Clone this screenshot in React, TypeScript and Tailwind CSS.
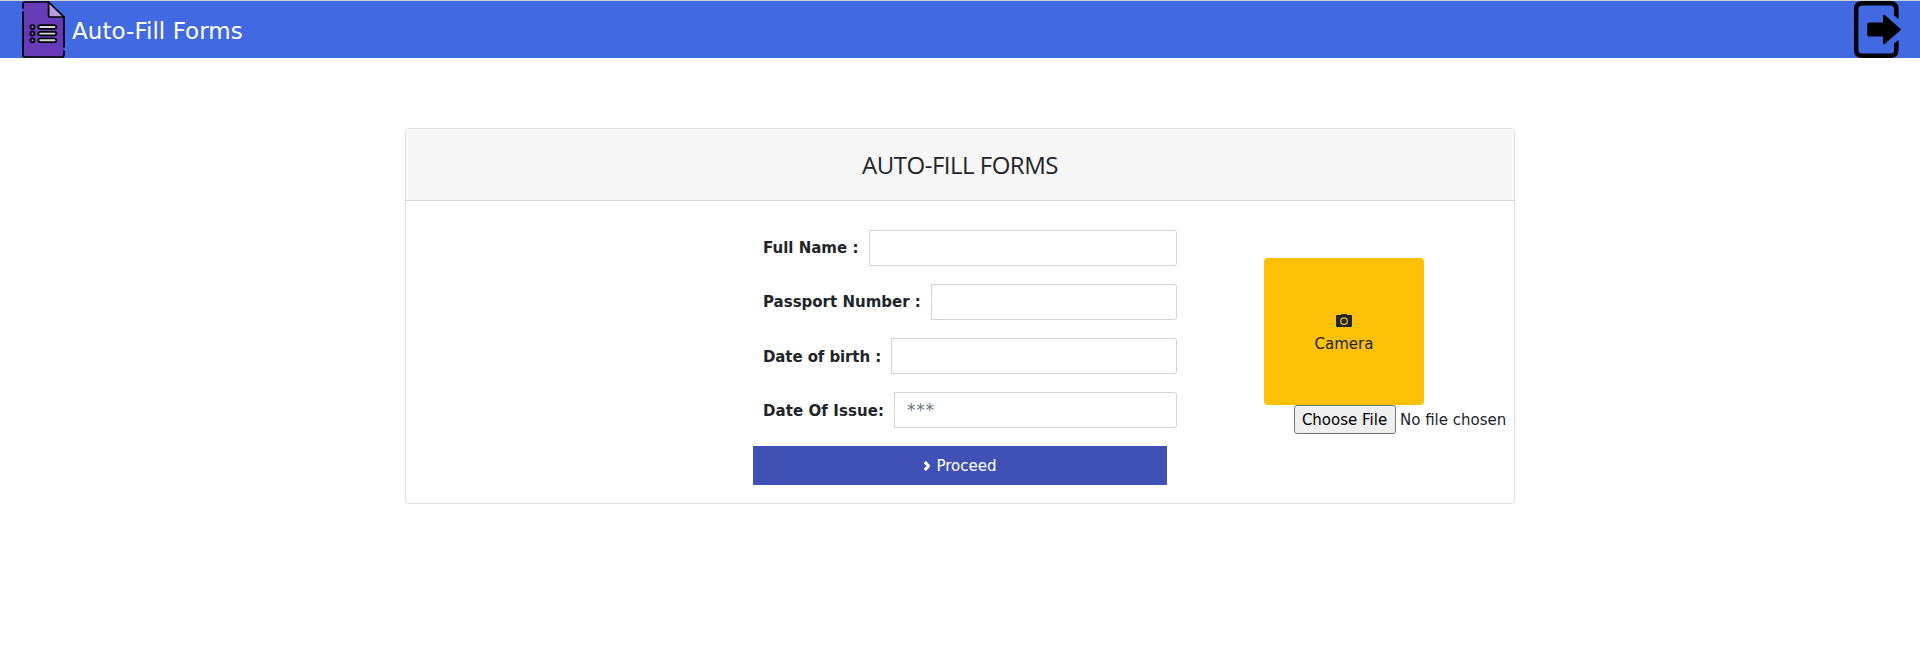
import React from 'react';

function DocumentIcon() {
  return (
    <svg className="block h-[57px] w-[43px]" viewBox="0 0 42 57" preserveAspectRatio="none" fill="none">
      <path d="M3 1H26L41 16V54.500Q41 56 39 56H3Q1 56 1 54V3Q1 1 3 1Z" fill="#673ab7" />
      <path d="M26 1L41 16H27.500Q26 16 26 14.500Z" fill="#b39ddb" />
      <g stroke="#000" strokeWidth="1.700" strokeLinejoin="round" strokeLinecap="round">
        <path d="M1 7V3Q1 1 3 1H26L41 16V46M41 50V54Q41 56 39 56H3Q1 56 1 54V11" />
        <path d="M26 1V14.500Q26 16 27.500 16H41" />
        {[26, 32.6, 39.3].map((y) => (
          <g key={y}>
            <circle cx="10.200" cy={y} r="2" fill="#9575cd" />
            <rect x="16" y={y - 1.8} width="17.500" height="3.600" rx="1.800" fill="#d8d8d8" />
          </g>
        ))}
      </g>
    </svg>
  );
}

function ExitIcon() {
  return (
    <svg className="block h-[57px] w-[48px]" viewBox="0 0 48 57">
      <path d="M42.300 15V8Q42.300 2.200 36.500 2.200H8Q2.200 2.200 2.200 8V49Q2.200 54.800 8 54.800H36.500Q42.300 54.800 42.300 49V42" fill="none" stroke="#000" strokeWidth="4.400" />
      <path d="M40.100 13V14.300L44.500 18.200V13ZM40.100 44V42.700L44.500 38.800V44Z" />
      <path d="M15.500 21.500H29V15Q29.200 13 31 14.200L47.200 28.500L31 42.800Q29.200 44 29 42V35.500H15.500Q13.200 35.500 13.200 33.200V23.800Q13.200 21.500 15.500 21.500Z" />
    </svg>
  );
}

function CameraIcon() {
  return (
    <svg className="block h-[13px] w-4" viewBox="0 0 16 13">
      <path fill="#212529" fillRule="evenodd" d="M1 1H4.800L5.500 0H10.500L11.200 1H15Q16 1 16 2V12Q16 13 15 13H1Q0 13 0 12V2Q0 1 1 1ZM8 3.200A3.900 3.900 0 1 0 8 11A3.900 3.900 0 1 0 8 3.200ZM8 4.400A2.700 2.700 0 1 1 8 9.800A2.700 2.700 0 1 1 8 4.400Z" />
    </svg>
  );
}

const inputBase = 'h-9 rounded-r-[3px] border border-[#ced4da] bg-white px-3 text-[17px] tracking-[0.7px] text-[#495057] outline-none placeholder:text-[#6c757d] placeholder:opacity-100';

const fields = [
  { id: 'name', label: 'Full Name :', labelWidth: 'w-[106px]', tracking: 'tracking-normal', placeholder: '' },
  { id: 'passport', label: 'Passport Number :', labelWidth: 'w-[168px]', tracking: 'tracking-normal', placeholder: '' },
  { id: 'birth', label: 'Date of birth :', labelWidth: 'w-[128px]', tracking: 'tracking-[-0.1px] pt-0.5', placeholder: '' },
  { id: 'issue', label: 'Date Of Issue:', labelWidth: 'w-[131px]', tracking: 'tracking-[0.08px] pt-0.5', placeholder: '***' },
];

export default function App() {
  return (
    <div className="h-[658px] overflow-hidden bg-white font-['DejaVu_Sans',sans-serif] text-[#212529]">
      <header className="flex h-[58px] items-start border-t border-[#cfd3d8] bg-[#4169e1] pr-[18px] pl-[22px]">
        <DocumentIcon />
        <span className="ml-[7px] flex h-[57px] items-center pt-[3px] text-[23px] tracking-[0.05px] whitespace-nowrap text-white">Auto-Fill Forms</span>
        <button type="button" aria-label="Log out" className="ml-auto">
          <ExitIcon />
        </button>
      </header>

      <main className="mx-auto mt-[70px] h-[376px] w-[1110px] overflow-hidden rounded-[4px] border border-[#dfdfdf]">
        <h1 className="flex h-[72px] items-center justify-center border-b border-[#d8d8d8] bg-[#f7f7f7] pt-px font-['Open_Sans',sans-serif] text-[24px] font-normal tracking-[-0.5px]">
          AUTO-FILL FORMS
        </h1>
        <div className="flex pt-[29px] pl-[347px]">
          <form className="w-[424px]">
            <div className="flex flex-col gap-[18px] pl-[10px]">
              {fields.map((f) => (
                <div key={f.id} className="flex h-9 items-center">
                  <label htmlFor={f.id} className={`${f.labelWidth} ${f.tracking} shrink-0 text-[15px] font-bold whitespace-nowrap`}>{f.label}</label>
                  <input id={f.id} placeholder={f.placeholder} className={`${inputBase} min-w-0 flex-1`} />
                </div>
              ))}
            </div>
            <button type="button" className="mt-[18px] flex h-[39px] w-[414px] items-center justify-center gap-[6px] bg-[#3f51b5] pt-px text-[15px] text-white">
              <svg className="h-[10px] w-[7px]" viewBox="0 0 7 10" fill="none">
                <path d="M1.800 1L5.600 5L1.800 9" stroke="#fff" strokeWidth="3" />
              </svg>
              <span>Proceed</span>
            </button>
          </form>
          <aside className="pt-[28px] pl-[87px]">
            <button type="button" className="flex h-[147px] w-40 flex-col items-center rounded-[4px] bg-[#ffc107] pt-14 text-[15px]">
              <CameraIcon />
              <span className="mt-[5px] leading-6">Camera</span>
            </button>
            <div className="flex h-[29px] items-center pl-[30px] text-[15px] whitespace-nowrap">
              <button type="button" className="h-[29px] w-[102px] rounded-[3px] border border-[#767676] bg-[#efefef] pt-px pr-px text-black">Choose File</button>
              <span className="ml-1 pt-px">No file chosen</span>
            </div>
          </aside>
        </div>
      </main>
    </div>
  );
}
